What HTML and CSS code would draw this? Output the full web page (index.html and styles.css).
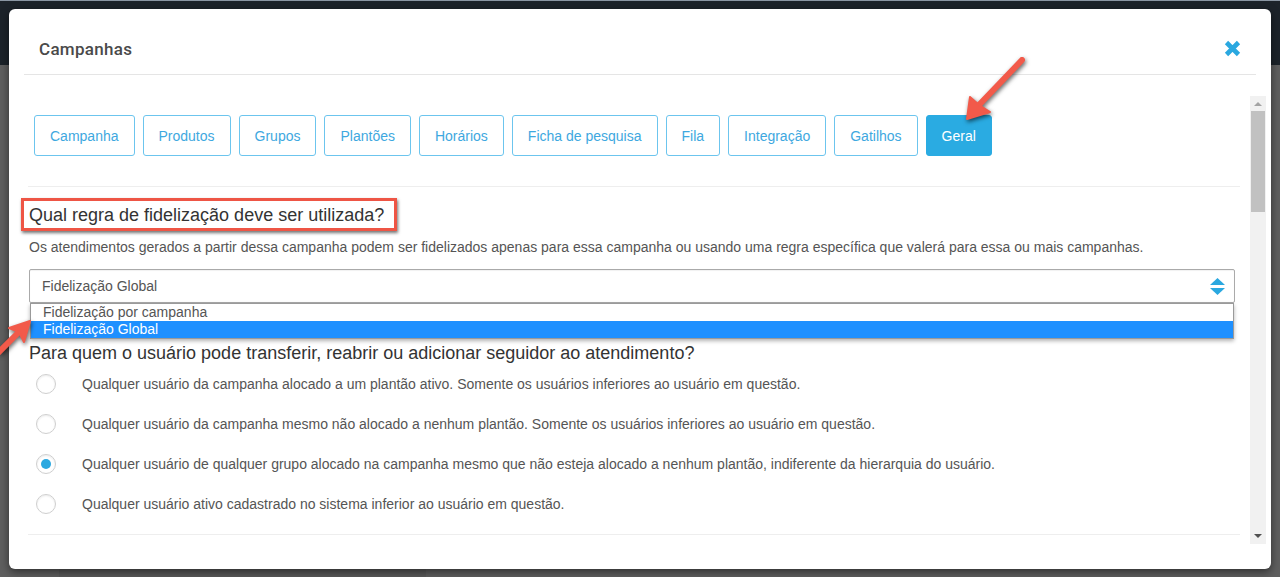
FILE: index.html
```html
<!DOCTYPE html>
<html lang="pt-BR">
<head>
    <meta charset="UTF-8">
    <meta name="viewport" content="width=device-width, initial-scale=1.0">
    <title>Campanhas</title>
    <link rel="stylesheet" href="styles.css">
</head>
<body>
    <!-- page behind the modal -->
    <div class="app">
        <div class="topbar"></div>
        <div class="backdrop">
            <div class="behind-row"></div>
        </div>
    </div>

    <div class="modal">
        <div class="modal-header">
            <h4 class="modal-title">Campanhas</h4>
            <button class="close" aria-label="Fechar">
                <svg width="17" height="17" viewBox="0 0 17 17">
                    <path d="M2.5 2.5 L14.5 14.5 M14.5 2.5 L2.5 14.5" stroke="#2aa8e0" stroke-width="4.6" fill="none"/>
                </svg>
            </button>
        </div>

        <div class="modal-body">
            <div class="scroll-content">
                <div class="tabs">
                    <button class="tab">Campanha</button>
                    <button class="tab">Produtos</button>
                    <button class="tab">Grupos</button>
                    <button class="tab">Plantões</button>
                    <button class="tab">Horários</button>
                    <button class="tab">Ficha de pesquisa</button>
                    <button class="tab">Fila</button>
                    <button class="tab">Integração</button>
                    <button class="tab">Gatilhos</button>
                    <button class="tab active">Geral</button>
                </div>

                <hr class="divider">

                <h3 class="question marked">Qual regra de fidelização deve ser utilizada?</h3>
                <p class="hint">Os atendimentos gerados a partir dessa campanha podem ser fidelizados apenas para essa campanha ou usando uma regra específica que valerá para essa ou mais campanhas.</p>

                <div class="select-wrap">
                    <div class="select">
                        <span>Fidelização Global</span>
                        <svg width="15" height="17" viewBox="0 0 15 17">
                            <polygon points="0,7 7.5,0 15,7" fill="#2aa8e0"/>
                            <polygon points="0,10 15,10 7.5,17" fill="#2aa8e0"/>
                        </svg>
                    </div>
                    <ul class="select-options">
                        <li>Fidelização por campanha</li>
                        <li class="selected">Fidelização Global</li>
                    </ul>
                </div>

                <h3 class="question second">Para quem o usuário pode transferir, reabrir ou adicionar seguidor ao atendimento?</h3>

                <div class="radio-list">
                    <label class="radio-row"><span class="radio"></span>Qualquer usuário da campanha alocado a um plantão ativo. Somente os usuários inferiores ao usuário em questão.</label>
                    <label class="radio-row"><span class="radio"></span>Qualquer usuário da campanha mesmo não alocado a nenhum plantão. Somente os usuários inferiores ao usuário em questão.</label>
                    <label class="radio-row"><span class="radio checked"></span>Qualquer usuário de qualquer grupo alocado na campanha mesmo que não esteja alocado a nenhum plantão, indiferente da hierarquia do usuário.</label>
                    <label class="radio-row"><span class="radio"></span>Qualquer usuário ativo cadastrado no sistema inferior ao usuário em questão.</label>
                </div>

                <hr class="divider bottom">
            </div>

            <div class="scrollbar">
                <div class="sb-btn up"><span class="tri-up"></span></div>
                <div class="sb-thumb"></div>
                <div class="sb-space"></div>
                <div class="sb-btn down"><span class="tri-down"></span></div>
            </div>
        </div>
    </div>

    <!-- red annotation arrows -->
    <svg class="annotations" width="1280" height="577" viewBox="0 0 1280 577">
        <g fill="#f25a4a" stroke="#f25a4a" stroke-linejoin="round">
            <line x1="1022" y1="60" x2="978" y2="106" stroke-width="6" stroke-linecap="round"/>
            <polygon points="967,119 970,97 979,105 990,112" stroke-width="2"/>
            <line x1="-6" y1="357" x2="20" y2="331" stroke-width="6" stroke-linecap="round"/>
            <polygon points="30,321 24,342 19,332 9,328" stroke-width="2"/>
        </g>
    </svg>
</body>
</html>
```

FILE: styles.css
```css
body {
    margin: 0;
    font-family: 'Liberation Sans', Arial, sans-serif;
    overflow: hidden;
    width: 1280px;
    height: 577px;
}

.app {
    height: 577px;
    display: flex;
    flex-direction: column;
}

.topbar {
    height: 67px;
    background: #1c232a;
    border-top: 1px solid #8a96a3;
}

.backdrop {
    flex: 1;
    background: #5f5f5f;
}

.behind-row {
    margin: 502px 0 0 59px;
    width: 367px;
    height: 10px;
    background: #595959;
}

/* modal */
.modal {
    position: absolute;
    top: 9px;
    left: 9px;
    width: 1262px;
    height: 560px;
    background: #fff;
    border-radius: 6px;
    box-shadow: 0 3px 9px rgba(0, 0, 0, 0.5);
}

.modal-header {
    display: flex;
    justify-content: space-between;
    align-items: center;
    margin: 0 15px;
    padding: 30px 15px 15px;
    border-bottom: 1px solid #e5e5e5;
}

.modal-title {
    margin: 0;
    font-family: Roboto, 'Open Sans', sans-serif;
    font-size: 17px;
    font-weight: 500;
    line-height: 20px;
    color: #4a4a4a;
    letter-spacing: 0.3px;
}

.close {
    border: none;
    background: none;
    padding: 0;
    width: 17px;
    height: 17px;
    margin-top: -2px;
    cursor: pointer;
}

.close svg {
    display: block;
}

.modal-body {
    display: flex;
    height: 448px;
    margin-top: 21px;
    padding: 0 5px 0 8px;
}

.scroll-content {
    flex: 1;
    overflow: hidden;
    padding: 19px 15px 0 12px;
}

/* tabs */
.tabs {
    display: flex;
    gap: 8px;
    margin-left: 5px;
}

.tab {
    height: 41px;
    padding: 0 15px;
    border: 1px solid #6cc5ee;
    border-radius: 3px;
    background: #fff;
    color: #3ea8e0;
    font-family: 'Liberation Sans', Arial, sans-serif;
    font-size: 14px;
    cursor: pointer;
}

.tab.active {
    background: #2aabe2;
    border-color: #2aabe2;
    color: #fff;
}

.divider {
    height: 0;
    border: 0;
    border-top: 1px solid #eee;
    margin: 30px -5px 0 -1px;
}

.divider.bottom {
    margin-top: 10px;
}

/* questions */
.question {
    margin: 0;
    font-size: 18px;
    font-weight: normal;
    line-height: 22px;
    color: #333;
}

.question.marked {
    width: fit-content;
    margin: 11px 0 0 -8px;
    padding: 3px 10px 2px 5px;
    border: 3px solid #ee5545;
    box-shadow: 1px 2px 3px rgba(0, 0, 0, 0.55);
}

.question.second {
    margin-top: 39px;
}

.hint {
    margin: 7px 0 0;
    font-size: 14px;
    line-height: 18px;
    color: #555;
}

/* select */
.select-wrap {
    position: relative;
    margin-top: 13px;
}

.select {
    display: flex;
    align-items: center;
    justify-content: space-between;
    box-sizing: border-box;
    height: 34px;
    padding: 0 9px 0 12px;
    border: 1px solid #aaa;
    border-radius: 2px;
    box-shadow: inset 0 1px 1px rgba(0, 0, 0, 0.06);
    font-size: 14px;
    color: #555;
}

.select svg {
    display: block;
}

.select-options {
    position: absolute;
    top: 100%;
    left: 1px;
    right: 1px;
    margin: 0;
    padding: 0;
    list-style: none;
    background: #fff;
    border: 1px solid #9a9a9a;
    box-shadow: 0 2px 4px rgba(0, 0, 0, 0.3);
    font-size: 14px;
    color: #555;
}

.select-options li {
    height: 17px;
    line-height: 17px;
    padding: 0 12px;
}

.select-options li.selected {
    background: #1e90ff;
    color: #fff;
}

/* radios */
.radio-row {
    display: flex;
    align-items: center;
    height: 40px;
    font-size: 14px;
    color: #555;
}

.radio {
    display: flex;
    align-items: center;
    justify-content: center;
    box-sizing: border-box;
    width: 20px;
    height: 20px;
    margin: 0 26px 0 7px;
    border: 1px solid #cfcfcf;
    border-radius: 50%;
    background: #fff;
    box-shadow: inset 0 1px 2px rgba(0, 0, 0, 0.08);
}

.radio.checked::after {
    content: '';
    width: 10px;
    height: 10px;
    border-radius: 50%;
    background: #2aa8e0;
}

/* fake scrollbar */
.scrollbar {
    width: 16px;
    display: flex;
    flex-direction: column;
    background: #f1f1f1;
}

.sb-btn {
    display: flex;
    align-items: center;
    justify-content: center;
}

.sb-btn.up {
    height: 15px;
}

.sb-btn.down {
    height: 17px;
}

.tri-up {
    border-left: 4px solid transparent;
    border-right: 4px solid transparent;
    border-bottom: 4px solid #a3a3a3;
}

.tri-down {
    border-left: 4px solid transparent;
    border-right: 4px solid transparent;
    border-top: 4px solid #505050;
}

.sb-thumb {
    height: 101px;
    margin: 0 1px;
    background: #c1c1c1;
}

.sb-space {
    flex: 1;
}

.annotations {
    position: absolute;
    top: 0;
    left: 0;
    pointer-events: none;
    filter: drop-shadow(1px 2px 2px rgba(0, 0, 0, 0.6));
}
```
